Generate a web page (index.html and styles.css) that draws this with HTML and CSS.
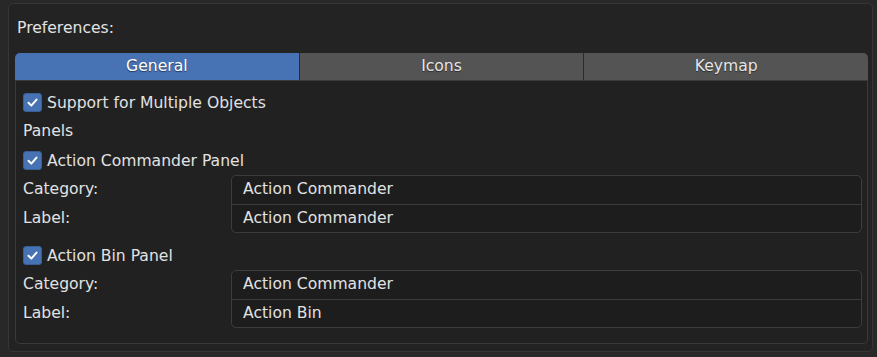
FILE: index.html
```html
<!DOCTYPE html>
<html lang="en">
<head>
    <meta charset="UTF-8">
    <title>Preferences</title>
    <link rel="stylesheet" href="styles.css">
</head>
<body>
    <div class="prefs">
        <div class="title">Preferences:</div>
        <div class="tabs">
            <div class="tab active">General</div>
            <div class="tab">Icons</div>
            <div class="tab">Keymap</div>
        </div>
        <div class="content">
            <label class="check-row">
                <span class="checkbox"><svg viewBox="0 0 19 19"><path d="M5 9.8 L8.2 13 L14 6.2"/></svg></span>
                Support for Multiple Objects
            </label>
            <div class="row">Panels</div>
            <label class="check-row">
                <span class="checkbox"><svg viewBox="0 0 19 19"><path d="M5 9.8 L8.2 13 L14 6.2"/></svg></span>
                Action Commander Panel
            </label>
            <div class="props">
                <div class="labels">
                    <div class="row">Category:</div>
                    <div class="row">Label:</div>
                </div>
                <div class="fields">
                    <div class="field">Action Commander</div>
                    <div class="field">Action Commander</div>
                </div>
            </div>
            <label class="check-row spaced">
                <span class="checkbox"><svg viewBox="0 0 19 19"><path d="M5 9.8 L8.2 13 L14 6.2"/></svg></span>
                Action Bin Panel
            </label>
            <div class="props">
                <div class="labels">
                    <div class="row">Category:</div>
                    <div class="row">Label:</div>
                </div>
                <div class="fields">
                    <div class="field">Action Commander</div>
                    <div class="field">Action Bin</div>
                </div>
            </div>
        </div>
    </div>
</body>
</html>
```

FILE: styles.css
```css
* {
    margin: 0;
    padding: 0;
    box-sizing: border-box;
}

body {
    font-family: 'DejaVu Sans', sans-serif;
    font-size: 15.6px;
    background: #282828;
    color: #e2e2e2;
    padding: 3px 4px 5px 8px;
    width: 877px;
    height: 357px;
}

.prefs {
    background: #232323;
    border: 1px solid #363636;
    border-radius: 5px;
    height: 349px;
    padding: 0 4px 0 6px;
}

.title {
    height: 49px;
    padding: 12px 0 0 2px;
    line-height: 24px;
}

.tabs {
    display: grid;
    grid-template-columns: 1fr 1fr 1fr;
    gap: 1px;
    background: #2b2b2b;
    border-radius: 5px 5px 0 0;
    overflow: hidden;
    height: 28px;
    border-bottom: 1px solid #3c3c3c;
}

.tab {
    background: #545454;
    text-align: center;
    line-height: 27px;
    color: #e6e6e6;
    text-shadow: 0 1px 1px rgba(0, 0, 0, 0.5);
}

.tab.active {
    background: #4772b3;
    color: #ffffff;
}

.content {
    background: #212121;
    border: 1px solid #3a3a3a;
    border-top: none;
    border-radius: 0 0 5px 5px;
    height: 263px;
    padding: 7px 5px 0 7px;
}

.row {
    height: 29px;
    line-height: 29px;
}

.check-row {
    display: flex;
    align-items: center;
    gap: 5px;
    height: 29px;
}

.check-row.spaced {
    margin-top: 8px;
}

.checkbox {
    width: 19px;
    height: 19px;
    border-radius: 3px;
    background: #4772b3;
    border: 1px solid #3a5f96;
    display: flex;
}

.checkbox svg {
    width: 100%;
    height: 100%;
}

.checkbox path {
    fill: none;
    stroke: #ffffff;
    stroke-width: 2.2;
    stroke-linecap: round;
    stroke-linejoin: round;
}

.props {
    display: grid;
    grid-template-columns: 208px 1fr;
}

.fields {
    border: 1px solid #3d3d3d;
    border-radius: 5px;
    background: #1d1d1d;
}

.field {
    height: 28px;
    line-height: 27px;
    padding-left: 11px;
}

.field + .field {
    border-top: 1px solid #3d3d3d;
}
```
